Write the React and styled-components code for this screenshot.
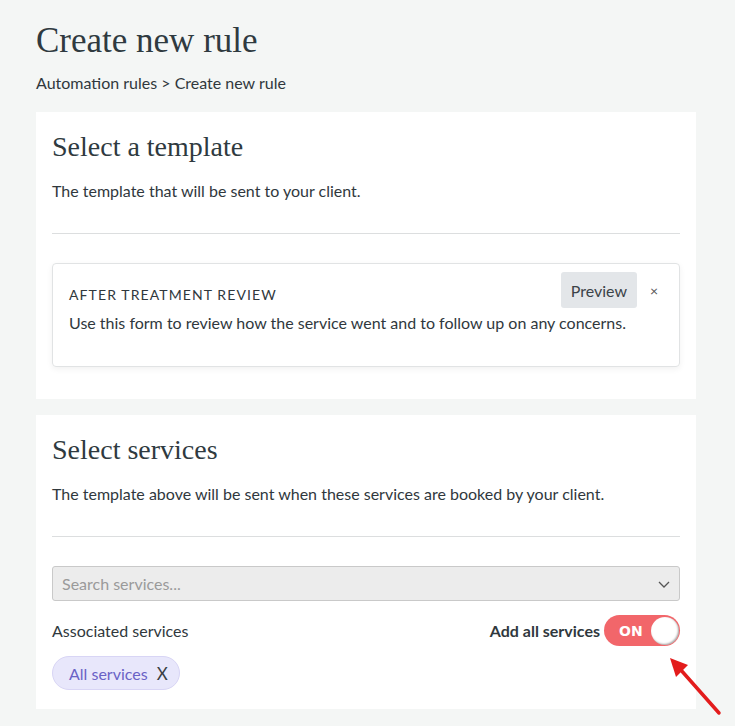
import React from 'react';
import styled, { createGlobalStyle } from 'styled-components';

const GlobalStyle = createGlobalStyle`
  html, body {
    margin: 0;
    background: #f4f6f5;
  }
  body {
    font-family: Lato, "Liberation Sans", sans-serif;
    color: #30383d;
  }
`;

const Page = styled.div`
  position: relative;
  padding: 22px 39px 16px 36px;
  display: flex;
  flex-direction: column;
`;

const Title = styled.h1`
  margin: 0;
  font-family: "Liberation Serif", serif;
  font-weight: 400;
  font-size: 35px;
  line-height: 38px;
  color: #2f3a40;
`;

const Breadcrumb = styled.div`
  margin-top: 13px;
  font-size: 16px;
  line-height: 20px;
  color: #30383d;
`;

const Card = styled.section`
  background: #fff;
  margin-top: ${(p) => p.$gap}px;
  padding: 19px 16px 19px;
  display: flex;
  flex-direction: column;
`;

const CardTitle = styled.h2`
  margin: 0;
  font-family: "Liberation Serif", serif;
  font-weight: 400;
  font-size: 28px;
  line-height: 32px;
  color: #2f3a40;
`;

const CardText = styled.p`
  margin: 18px 0 0;
  font-size: 16px;
  line-height: 20px;
  color: #30383d;
`;

const Divider = styled.hr`
  margin: 32px 0 29px;
  border: 0;
  border-top: 1px solid #dcdedf;
`;

const TemplateBox = styled.div`
  border: 1px solid #e1e3e4;
  border-radius: 4px;
  box-shadow: 0 2px 6px rgba(0, 0, 0, 0.06);
  padding: 8px 0 33px 16px;
  margin-bottom: 13px;
  display: flex;
  flex-direction: column;
`;

const TemplateHead = styled.div`
  display: flex;
  align-items: center;
  justify-content: space-between;
`;

const TemplateName = styled.div`
  font-size: 14px;
  letter-spacing: 1.1px;
  text-transform: uppercase;
  color: #30383d;
  padding-top: 8px;
`;

const HeadActions = styled.div`
  display: flex;
  align-items: center;
  gap: 13px;
`;

const PreviewButton = styled.button`
  font-family: Lato, sans-serif;
  font-size: 16px;
  color: #3b4348;
  background: #e3e6e9;
  border: 0;
  border-radius: 3px;
  width: 76px;
  height: 36px;
  padding: 0;
`;

const CloseX = styled.span`
  font-size: 14px;
  color: #555;
  margin-right: 21px;
`;

const TemplateDesc = styled.div`
  margin-top: 5px;
  font-size: 16px;
  line-height: 20px;
  color: #30383d;
`;

const SelectBox = styled.div`
  height: 33px;
  background: #ececec;
  border: 1px solid #c9c9c9;
  border-radius: 3px;
  display: flex;
  align-items: center;
  justify-content: space-between;
  padding: 0 8px 0 9px;
  color: #9a9a9a;
  font-size: 16px;
`;

const Row = styled.div`
  margin-top: 14px;
  display: flex;
  align-items: center;
  justify-content: space-between;
`;

const Label = styled.div`
  font-size: 16px;
  color: #30383d;
`;

const ToggleWrap = styled.div`
  display: flex;
  align-items: center;
  gap: 4px;
  font-size: 16px;
  font-weight: 700;
  color: #30383d;
`;

const Toggle = styled.div`
  width: 76px;
  height: 31px;
  border-radius: 16px;
  background: #f2666a;
  display: flex;
  align-items: center;
  justify-content: space-between;
  padding: 0 1px 0 15px;
  box-sizing: border-box;
  color: #fff;
  font-family: "DejaVu Sans", sans-serif;
  font-weight: 700;
  font-size: 14px;
`;

const Knob = styled.span`
  width: 28px;
  height: 28px;
  border-radius: 50%;
  background: #fff;
  box-shadow: inset -1px -1px 2px rgba(0, 0, 0, 0.35);
`;

const Chips = styled.div`
  margin-top: 10px;
  display: flex;
`;

const Chip = styled.span`
  display: inline-flex;
  align-items: center;
  gap: 9px;
  height: 32px;
  padding: 0 11px 0 16px;
  border-radius: 17px;
  background: #e8e7fb;
  border: 1px solid #d8d5f5;
  color: #6a62c6;
  font-size: 16px;
`;

const ChipX = styled.span`
  color: #3a3f44;
  font-size: 17px;
`;

const Arrow = styled.svg`
  position: absolute;
  left: 664px;
  top: 650px;
`;

export default function App() {
  return (
    <>
      <GlobalStyle />
      <Page>
        <Title>Create new rule</Title>
        <Breadcrumb>Automation rules &gt; Create new rule</Breadcrumb>

        <Card $gap={19}>
          <CardTitle>Select a template</CardTitle>
          <CardText>The template that will be sent to your client.</CardText>
          <Divider />
          <TemplateBox>
            <TemplateHead>
              <TemplateName>After treatment review</TemplateName>
              <HeadActions>
                <PreviewButton>Preview</PreviewButton>
                <CloseX>×</CloseX>
              </HeadActions>
            </TemplateHead>
            <TemplateDesc>
              Use this form to review how the service went and to follow up on any concerns.
            </TemplateDesc>
          </TemplateBox>
        </Card>

        <Card $gap={16}>
          <CardTitle>Select services</CardTitle>
          <CardText>The template above will be sent when these services are booked by your client.</CardText>
          <Divider />
          <SelectBox>
            <span>Search services...</span>
            <svg width="14" height="10" viewBox="0 0 14 10">
              <path d="M2 3l5 5 5-5" fill="none" stroke="#555" strokeWidth="1.3" />
            </svg>
          </SelectBox>
          <Row>
            <Label>Associated services</Label>
            <ToggleWrap>
              Add all services
              <Toggle>
                ON
                <Knob />
              </Toggle>
            </ToggleWrap>
          </Row>
          <Chips>
            <Chip>
              All services <ChipX>X</ChipX>
            </Chip>
          </Chips>
        </Card>

        <Arrow width="60" height="70" viewBox="0 0 60 70">
          <line x1="55" y1="63" x2="16" y2="19" stroke="#e31c1c" strokeWidth="3.5" strokeLinecap="round" />
          <polygon points="6,8 24,15 12,27" fill="#e31c1c" />
        </Arrow>
      </Page>
    </>
  );
}
